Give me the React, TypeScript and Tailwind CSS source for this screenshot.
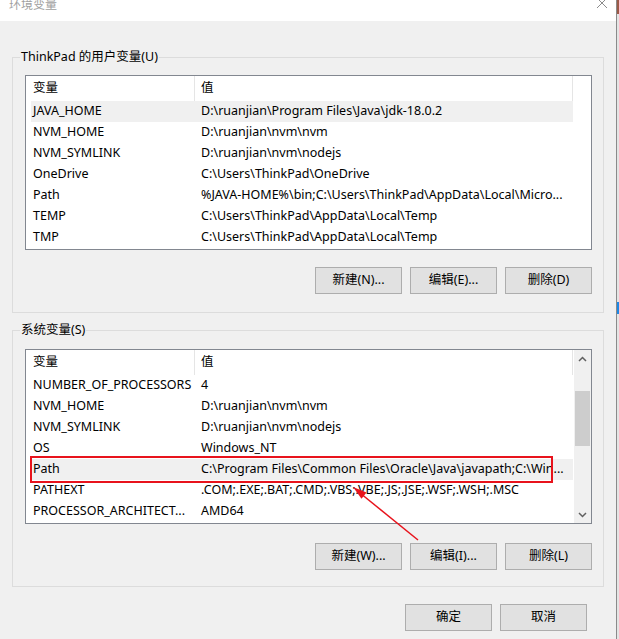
import React from 'react';

const userVars: Array<[string, string]> = [
  ['JAVA_HOME', 'D:\\ruanjian\\Program Files\\Java\\jdk-18.0.2'],
  ['NVM_HOME', 'D:\\ruanjian\\nvm\\nvm'],
  ['NVM_SYMLINK', 'D:\\ruanjian\\nvm\\nodejs'],
  ['OneDrive', 'C:\\Users\\ThinkPad\\OneDrive'],
  ['Path', '%JAVA-HOME%\\bin;C:\\Users\\ThinkPad\\AppData\\Local\\Micro...'],
  ['TEMP', 'C:\\Users\\ThinkPad\\AppData\\Local\\Temp'],
  ['TMP', 'C:\\Users\\ThinkPad\\AppData\\Local\\Temp'],
];

const sysVars: Array<[string, string]> = [
  ['NUMBER_OF_PROCESSORS', '4'],
  ['NVM_HOME', 'D:\\ruanjian\\nvm\\nvm'],
  ['NVM_SYMLINK', 'D:\\ruanjian\\nvm\\nodejs'],
  ['OS', 'Windows_NT'],
  ['Path', 'C:\\Program Files\\Common Files\\Oracle\\Java\\javapath;C:\\Win...'],
  ['PATHEXT', '.COM;.EXE;.BAT;.CMD;.VBS;.VBE;.JS;.JSE;.WSF;.WSH;.MSC'],
  ['PROCESSOR_ARCHITECT...', 'AMD64'],
];

const Chevron = ({ up }: { up?: boolean }) => (
  <svg width="9" height="6" viewBox="0 0 9 6" className="block">
    <path
      d={up ? 'M1 5 L4.5 1.5 L8 5' : 'M1 1 L4.5 4.5 L8 1'}
      fill="none"
      stroke="#606060"
      strokeWidth="1.5"
    />
  </svg>
);

const Scrollbar = () => (
  <div className="flex w-[17px] shrink-0 flex-col bg-[#f0f0f0]">
    <div className="flex h-[17px] items-center justify-center">
      <Chevron up />
    </div>
    <div className="flex flex-1 flex-col pt-[24px]">
      <div className="mx-[1px] h-[55px] bg-[#cdcdcd]" />
    </div>
    <div className="flex h-[17px] items-center justify-center">
      <Chevron />
    </div>
  </div>
);

const VarList = ({ rows, selected, scroll }: { rows: Array<[string, string]>; selected: number; scroll?: boolean }) => (
  <div className="flex h-[175px] w-[567px] border border-[#828790] bg-white">
    <div className="flex min-w-0 flex-1 flex-col">
      <div className="flex h-[25px] shrink-0">
        <div className="flex w-[169px] items-center border-r border-[#e5e5e5] pl-[7px]">变量</div>
        <div className="flex w-[378px] items-center border-r border-[#e5e5e5] pl-[6px]">值</div>
      </div>
      {rows.map(([name, value], i) => (
        <div
          key={name + i}
          className={`ml-[5px] flex h-[21px] w-[542px] shrink-0 items-center whitespace-nowrap ${i === selected ? 'bg-[#f0f0f0]' : ''}`}
        >
          <div className="w-[164px] overflow-hidden pl-[2px]">{name}</div>
          <div className="min-w-0 flex-1 overflow-hidden pl-[6px]">{value}</div>
        </div>
      ))}
    </div>
    {scroll && <Scrollbar />}
  </div>
);

const Btn = ({ children }: { children: React.ReactNode }) => (
  <button className="flex h-[27px] w-[87px] items-center justify-center border border-[#adadad] bg-[#e1e1e1] text-black">
    {children}
  </button>
);

const Group = ({ title, className, children }: { title: string; className: string; children: React.ReactNode }) => (
  <div className={`relative ml-[12px] w-[592px] border border-[#dcdcdc] pl-[12px] pr-[11px] ${className}`}>
    <span className="absolute left-[7px] top-[-9px] bg-[#f0f0f0] px-[1px] leading-[16px]">{title}</span>
    {children}
  </div>
);

export default function App() {
  return (
    <div className="relative flex h-[639px] w-[619px] overflow-hidden bg-[#f0f0f0] font-['Noto_Sans','Noto_Sans_CJK_SC',sans-serif] text-[12.5px] text-black">
      <div className="flex w-[616px] shrink-0 flex-col">
        <div className="flex h-[21px] shrink-0 items-start justify-between bg-white pl-[9px] pr-[8px]">
          <span className="mt-[-2px] text-[12px] leading-[14px] text-[#a0a0a0]">环境变量</span>
          <svg width="12" height="12" viewBox="0 0 12 12" className="mt-[-3px]">
            <path d="M1 1 L11 11 M11 1 L1 11" stroke="#8c8c8c" strokeWidth="1" />
          </svg>
        </div>

        <Group title="ThinkPad 的用户变量(U)" className="mt-[36px] pt-[17px] pb-[18px]">
          <VarList rows={userVars} selected={0} />
          <div className="mt-[17px] flex justify-end gap-[8px]">
            <Btn>新建(N)...</Btn>
            <Btn>编辑(E)...</Btn>
            <Btn>删除(D)</Btn>
          </div>
        </Group>

        <Group title="系统变量(S)" className="mt-[17px] pt-[18px] pb-[16px]">
          <VarList rows={sysVars} selected={4} scroll />
          <div className="mt-[19px] flex justify-end gap-[8px]">
            <Btn>新建(W)...</Btn>
            <Btn>编辑(I)...</Btn>
            <Btn>删除(L)</Btn>
          </div>
        </Group>

        <div className="mt-[17px] flex justify-end gap-[8px] pr-[29px]">
          <Btn>确定</Btn>
          <Btn>取消</Btn>
        </div>
      </div>

      <div className="w-[1px] shrink-0 bg-[#8a8a8a]" />
      <div className="flex w-[2px] shrink-0 flex-col bg-[#e4e4e4]">
        <div className="h-[14px] bg-[#9a5a48]" />
        <div className="h-[288px]" />
        <div className="h-[12px] bg-[#1e88e5]" />
      </div>

      <svg className="pointer-events-none absolute inset-0" width="619" height="639" viewBox="0 0 619 639">
        <rect x="31" y="457" width="521" height="25" fill="none" stroke="#e8131c" strokeWidth="2" />
        <line x1="418" y1="540" x2="360" y2="493" stroke="#e8131c" strokeWidth="1.5" />
        <polygon points="353,487 361.5,498.8 366.5,492.6" fill="#e8131c" />
      </svg>
    </div>
  );
}
